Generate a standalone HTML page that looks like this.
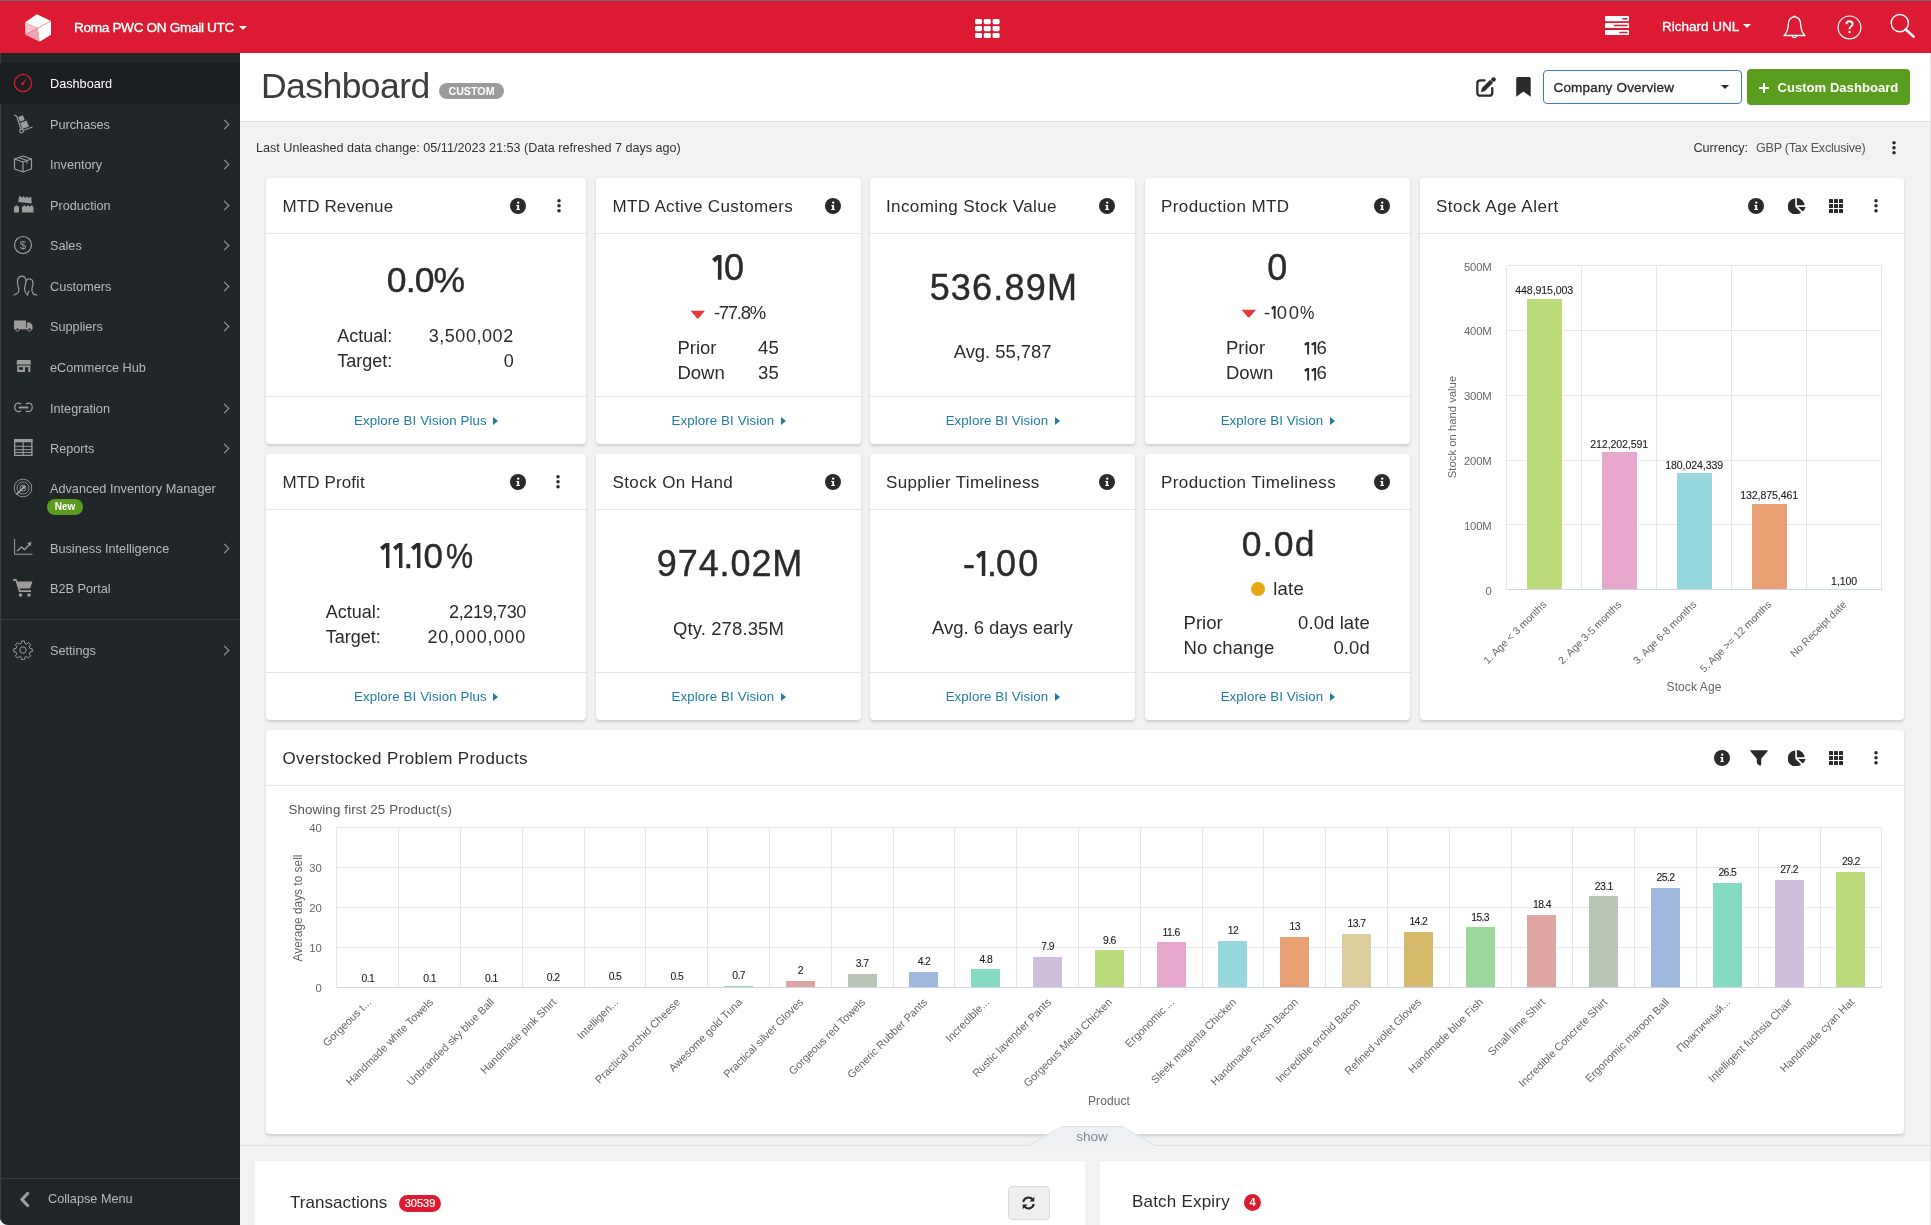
<!DOCTYPE html>
<html><head><meta charset="utf-8">
<style>
*{box-sizing:border-box;margin:0;padding:0}
html,body{width:1931px;height:1225px;overflow:hidden;background:#f2f2f2;font-family:"Liberation Sans",sans-serif;color:#333}
body{will-change:transform}
.abs{position:absolute}
#frameTop{position:absolute;left:0;top:0;width:1931px;height:1px;background:#6e6e6e;z-index:50}
#frameR{position:absolute;right:0;top:53px;width:1px;height:1172px;background:#e2e2e2;z-index:50}
#hdr{position:absolute;left:0;top:1px;width:1931px;height:52px;background:#dc1b32}
#side{position:absolute;left:0;top:53px;width:240px;height:1172px;background:#212729;border-bottom-left-radius:8px;overflow:hidden}
#side .edge{position:absolute;left:0;top:0;width:1px;height:100%;background:#3a4043}
.ni{position:absolute;left:0;width:240px;height:40px;color:#b9b9b9;font-size:12.7px}
.ni .t{position:absolute;left:50px;top:1px;line-height:40px;white-space:nowrap}
.ni svg.ic{position:absolute;left:14px;top:10px}
.ni .chev{position:absolute;left:221px;top:17px;width:7px;height:7px;border-right:1.3px solid #a0a0a0;border-top:1.3px solid #a0a0a0;transform:rotate(45deg)}
#main{position:absolute;left:240px;top:53px;width:1690px;height:1172px}
.card{position:absolute;background:#fff;border-radius:4px;box-shadow:0 2px 3px rgba(0,0,0,.15)}
.card .hd{position:absolute;left:0;top:0;width:100%;border-bottom:1px solid #e1e4ea}
.card .ttl{position:absolute;left:16px;font-size:17px;color:#333;white-space:nowrap}
.card .ft{position:absolute;left:0;width:100%;border-top:1px solid #e1e4ea}
.lnk{position:absolute;left:0;width:100%;text-align:center;color:#1b7ea9;font-size:13.5px;white-space:nowrap}
.lnk i{display:inline-block;width:0;height:0;border-left:4px solid #1b7ea9;border-top:4.5px solid transparent;border-bottom:4.5px solid transparent;margin-left:6px;vertical-align:0px}
.info{position:absolute;width:16px;height:16px;border-radius:50%;background:#262626;color:#fff;font:bold 11px "Liberation Mono",monospace;text-align:center;line-height:16px}
.kebab{position:absolute;width:4px;height:16px}
.kebab b{position:absolute;left:0;width:3.4px;height:3.4px;border-radius:50%;background:#2b2b2b}
.big{position:absolute;left:0;width:100%;text-align:center;color:#2b2b2b;white-space:nowrap}
</style></head>
<body>
<div id="frameTop"></div>
<div id="frameR"></div>
<div id="hdr">
  <!-- logo -->
  <svg class="abs" style="left:24px;top:12px" width="28" height="30" viewBox="0 0 28 30">
    <polygon points="12.8,1.2 1,9.6 13.8,15 27,8.1" fill="#fff"/>
    <polygon points="1,9.6 13.8,15 1.3,21.8" fill="#f5c3c9"/>
    <polygon points="1.3,21.8 13.8,15 15.7,28.7" fill="#efa6b0"/>
    <polygon points="13.8,15 27,8.1 27,21.8 15.7,28.7" fill="#fff"/>
    <line x1="1.3" y1="21.8" x2="27" y2="8.1" stroke="#e8808e" stroke-width="0.7"/>
  </svg>
  <div class="abs" style="left:74px;top:20.1px;line-height:13.6px;color:#fff;font-size:13.6px;letter-spacing:-0.33px;-webkit-text-stroke:0.35px #fff;white-space:nowrap">Roma PWC ON Gmail UTC</div>
  <div class="abs" style="left:239px;top:25.3px;border-top:4.5px solid #fff;border-left:4.1px solid transparent;border-right:4.1px solid transparent"></div>
  <!-- grid icon -->
  <svg class="abs" style="left:975.2px;top:17.8px" width="25" height="20" viewBox="0 0 25 20"><g fill="#fff"><rect x="0.0" y="0.00" width="7" height="5.2" rx="1.4"/><rect x="8.8" y="0.00" width="7" height="5.2" rx="1.4"/><rect x="17.6" y="0.00" width="7" height="5.2" rx="1.4"/><rect x="0.0" y="6.95" width="7" height="5.2" rx="1.4"/><rect x="8.8" y="6.95" width="7" height="5.2" rx="1.4"/><rect x="17.6" y="6.95" width="7" height="5.2" rx="1.4"/><rect x="0.0" y="13.90" width="7" height="5.2" rx="1.4"/><rect x="8.8" y="13.90" width="7" height="5.2" rx="1.4"/><rect x="17.6" y="13.90" width="7" height="5.2" rx="1.4"/></g></svg>

  <!-- server icon -->
  <svg class="abs" style="left:1605px;top:15px" width="24" height="20" viewBox="0 0 24 20">
    <rect x="0" y="0" width="24" height="5.2" rx="0.8" fill="#fff"/>
    <rect x="0" y="7.1" width="24" height="5" rx="0.8" fill="#fff"/>
    <rect x="0" y="14" width="24" height="5" rx="0.8" fill="#fff"/>
    <rect x="17.2" y="1.9" width="5.4" height="1.5" rx="0.7" fill="#dc1b32"/>
    <rect x="9" y="8.85" width="13.6" height="1.5" rx="0.7" fill="#dc1b32"/>
    <rect x="14.2" y="15.75" width="8.4" height="1.5" rx="0.7" fill="#dc1b32"/>
  </svg>
  <div class="abs" style="left:1662px;top:0;line-height:52px;color:#fff;font-size:13.5px;white-space:nowrap;-webkit-text-stroke:0.35px #fff">Richard UNL<span style="display:inline-block;margin-left:4px;border-top:4.5px solid #fff;border-left:4.2px solid transparent;border-right:4.2px solid transparent;vertical-align:3px;-webkit-text-stroke:0"></span></div>
  <!-- bell -->
  <svg class="abs" style="left:1782px;top:14px" width="25" height="26" viewBox="0 0 25 26">
    <path d="M12.5 1.5 C8 2.5 6.2 6 6.2 10 C6.2 14.5 5.5 17 2 20.5 H23 C19.5 17 18.8 14.5 18.8 10 C18.8 6 17 2.5 12.5 1.5 Z" fill="none" stroke="#fff" stroke-width="1.3" stroke-linejoin="round"/>
    <path d="M12.5 0.3 L13.5 1.8 H11.5 Z" fill="#fff"/>
    <path d="M10.3 21 A2.3 2.3 0 0 0 14.7 21" fill="none" stroke="#fff" stroke-width="1.1"/>
  </svg>
  <!-- help -->
  <svg class="abs" style="left:1836px;top:13px" width="27" height="27" viewBox="0 0 27 27">
    <circle cx="13.5" cy="13.4" r="11.4" fill="none" stroke="#fff" stroke-width="1.2"/>
    <path d="M10.3 10.3 C10.3 8.2 11.8 7.2 13.5 7.2 C15.3 7.2 16.6 8.3 16.6 10 C16.6 12 14 12.3 13.6 14.5 V15.2" fill="none" stroke="#fff" stroke-width="1.9"/>
    <circle cx="13.6" cy="18" r="1.2" fill="#fff"/>
  </svg>
  <!-- search -->
  <svg class="abs" style="left:1889px;top:12px" width="28" height="28" viewBox="0 0 28 28">
    <circle cx="10.8" cy="10.1" r="8.6" fill="none" stroke="#fff" stroke-width="1.4"/>
    <path d="M16.6 16.3 L24.6 23.6" stroke="#fff" stroke-width="2.6" stroke-linecap="round"/>
  </svg>
</div>

<div id="side">
  <div class="edge"></div>
<div class="abs" style="left:0;top:10px;width:240px;height:41px;background:#1b1f22"></div>
<div class="ni" style="top:10px"><svg class="ic" style="left:13px;top:10px" width="20" height="20" viewBox="0 0 20 20"><circle cx="10" cy="10" r="8.6" fill="none" stroke="#d81c32" stroke-width="1.3"/><path d="M14.2 5.4 L8.6 10.2 L10.2 11.6 Z" fill="#d81c32"/><circle cx="9.3" cy="10.9" r="1.3" fill="#d81c32"/></svg><div class="t" style="color:#fff;">Dashboard</div></div>
<div class="ni" style="top:51px"><svg class="ic" style="left:13px;top:10px" width="22" height="20" viewBox="0 0 22 20"><path d="M1 1.5 Q3 1 4 3 L8 15.5" fill="none" stroke="#9c9c9c" stroke-width="1.2"/><circle cx="8.5" cy="17" r="1.8" fill="none" stroke="#9c9c9c" stroke-width="1.2"/><path d="M10 16.5 L19.5 13" stroke="#9c9c9c" stroke-width="1.2"/><rect x="6" y="2" width="5" height="5" fill="#9c9c9c" transform="rotate(-20 8.5 4.5)"/><rect x="8" y="7.5" width="7" height="6.5" fill="#9c9c9c" transform="rotate(-20 11.5 10.7)"/></svg><div class="t" style="">Purchases</div><div class="chev"></div></div>
<div class="ni" style="top:91px"><svg class="ic" style="left:13px;top:10px" width="20" height="20" viewBox="0 0 20 20"><g fill="none" stroke="#9c9c9c" stroke-width="1.2" stroke-linejoin="round"><path d="M1.5 5 L10 2 L18.5 5 L18.5 15 L10 18 L1.5 15 Z"/><path d="M1.5 5 L10 8 L18.5 5"/><path d="M10 8 L10 18"/><path d="M5.5 3.5 L14 6.5 L14 9.5"/></g></svg><div class="t" style="">Inventory</div><div class="chev"></div></div>
<div class="ni" style="top:132px"><svg class="ic" style="left:14px;top:10px" width="24" height="20" viewBox="0 0 24 20"><g fill="#9c9c9c"><path d="M4.5 4.5 L5 1.5 h1.5 v1 h2 v-1 h1.5 v1 h2 v-1 h1.5 v1 h2 v-1 h1.5 L18 8 L4.5 7.5 Z" transform="rotate(4 11 5)"/><path d="M0 11.5 h1.5 v-1 h2 v1 h1.5 V17.5 H0 Z"/><path d="M8 11.5 h1.5 v-1 h2 v1 h1.5 v-1 h2 v1 h1.5 v-1 h2 v1 h1 V17.5 H8 Z"/></g></svg><div class="t" style="">Production</div><div class="chev"></div></div>
<div class="ni" style="top:172px"><svg class="ic" style="left:13px;top:10px" width="20" height="20" viewBox="0 0 20 20"><circle cx="10" cy="10" r="8.5" fill="none" stroke="#9c9c9c" stroke-width="1.2"/><text x="10" y="14.2" font-family="Liberation Sans" font-size="11.5" text-anchor="middle" fill="#9c9c9c">$</text></svg><div class="t" style="">Sales</div><div class="chev"></div></div>
<div class="ni" style="top:213px"><svg class="ic" style="left:13px;top:9px" width="26" height="22" viewBox="0 0 26 22"><g fill="none" stroke="#9c9c9c" stroke-width="1.2" stroke-linecap="round"><path d="M1 20 Q4 19 5.5 17 Q6.5 14 5 11 Q4 7 4.8 4 Q6.5 0.8 9.5 1.2 Q12.5 1.8 13 5 Q13 8 12 11 Q11 14 12 16 Q12.5 18.5 14.5 20"/><path d="M13.5 5.5 Q14.8 3.6 17.5 4 Q20 4.8 20 8 Q19.8 11 19 13 Q18.5 16 20 18.5 Q21.5 20 24 20"/><path d="M14.5 20 Q15 17 16 16"/></g></svg><div class="t" style="">Customers</div><div class="chev"></div></div>
<div class="ni" style="top:253px"><svg class="ic" style="left:14px;top:13.5px" width="20" height="12" viewBox="0 0 20 12"><g fill="#9c9c9c"><rect x="0" y="0.5" width="12" height="7.5"/><path d="M12.8 2.5 h3.5 L18.5 5.5 V8.5 H12.8 Z"/><rect x="0" y="8" width="18.5" height="1.3"/></g><circle cx="3.5" cy="9.5" r="1.7" fill="#212729" stroke="#9c9c9c" stroke-width="1"/><circle cx="15.5" cy="9.5" r="1.7" fill="#212729" stroke="#9c9c9c" stroke-width="1"/></svg><div class="t" style="">Suppliers</div><div class="chev"></div></div>
<div class="ni" style="top:294px"><svg class="ic" style="left:16px;top:13px" width="16" height="14" viewBox="0 0 16 14"><g fill="#9c9c9c"><path d="M1 0 H14.5 L15 4.5 H0.5 Z"/><path d="M1.2 5.5 H14.3 V12 H1.2 Z"/></g><rect x="3" y="7.2" width="4" height="2.6" fill="#212729"/><rect x="9" y="7.2" width="3.3" height="4.8" fill="#212729"/></svg><div class="t" style="">eCommerce Hub</div></div>
<div class="ni" style="top:335px"><svg class="ic" style="left:14px;top:14px" width="19" height="11" viewBox="0 0 20 11"><g fill="none" stroke="#9c9c9c" stroke-width="1.3"><path d="M7.5 2 Q5.5 0.6 4.3 0.9 Q0.7 1.3 0.8 5.5 Q1 9.5 4.5 9.8 Q6.5 9.8 7.5 9"/><path d="M12.5 2 Q14.5 0.6 15.7 0.9 Q19.3 1.3 19.2 5.5 Q19 9.5 15.5 9.8 Q13.5 9.8 12.5 9"/></g><rect x="5" y="4.5" width="10" height="2" fill="#9c9c9c"/></svg><div class="t" style="">Integration</div><div class="chev"></div></div>
<div class="ni" style="top:375px"><svg class="ic" style="left:14px;top:11px" width="19" height="18" viewBox="0 0 19 18"><g fill="#9c9c9c"><rect x="0" y="0" width="18.5" height="3.3"/><rect x="0" y="0" width="1.3" height="17"/><rect x="17.2" y="0" width="1.3" height="17"/><rect x="0" y="15.7" width="18.5" height="1.3"/><rect x="0" y="6.8" width="18.5" height="1"/><rect x="0" y="10.2" width="18.5" height="1"/><rect x="0" y="13" width="18.5" height="1"/><rect x="8.6" y="3" width="1.1" height="13"/></g></svg><div class="t" style="">Reports</div><div class="chev"></div></div>
<div class="ni" style="top:416px"><svg class="ic" style="left:13px;top:8.5px" width="20" height="20" viewBox="0 0 20 20"><g fill="none" stroke="#9c9c9c" stroke-width="0.9"><circle cx="10" cy="10" r="8.8"/><circle cx="10" cy="10" r="6"/><circle cx="10" cy="10" r="3"/></g><path d="M3.5 16.5 L11 9" stroke="#ababab" stroke-width="1.6"/><path d="M12 8 L8.5 8.5 L11.5 11.5 Z" fill="#ababab"/></svg><div class="t" style="line-height:16px;top:12px">Advanced Inventory Manager</div><div class="abs" style="left:47px;top:30px;width:36px;height:16px;border-radius:8px;background:#5a9d1e;color:#fff;font-size:10px;font-weight:bold;text-align:center;line-height:16px">New</div></div>
<div class="ni" style="top:475px"><svg class="ic" style="left:14px;top:11px" width="19" height="16" viewBox="0 0 19 16"><path d="M0.6 0 V15.2 H18.5" fill="none" stroke="#9c9c9c" stroke-width="1"/><path d="M3 12 L7.5 8 L10.5 10.5 L16 5" fill="none" stroke="#9c9c9c" stroke-width="1.3"/><path d="M17.5 3 L13.2 4 L16.5 7.3 Z" fill="#9c9c9c"/></svg><div class="t" style="">Business Intelligence</div><div class="chev"></div></div>
<div class="ni" style="top:515px"><svg class="ic" style="left:13px;top:10px" width="21" height="20" viewBox="0 0 21 20"><g fill="#9c9c9c"><path d="M0 1 H3.5 L4.5 3.5 H19.5 L17 10.5 H6.5 L7.2 12.3 H18 V14 H6 L2.5 2.7 H0 Z"/><circle cx="7.5" cy="17" r="1.8"/><circle cx="16" cy="17" r="1.8"/></g></svg><div class="t" style="">B2B Portal</div></div>
<div class="ni" style="top:577px"><svg class="ic" style="left:13px;top:10px" width="20" height="20" viewBox="0 0 20 20"><g fill="none" stroke="#9c9c9c" stroke-width="1"><path d="M8.6 1 h2.8 l0.5 2.4 l1.6 0.7 l2.1-1.4 l2 2 l-1.4 2.1 l0.7 1.6 l2.4 0.5 v2.8 l-2.4 0.5 l-0.7 1.6 l1.4 2.1 l-2 2 l-2.1-1.4 l-1.6 0.7 l-0.5 2.4 h-2.8 l-0.5-2.4 l-1.6-0.7 l-2.1 1.4 l-2-2 l1.4-2.1 l-0.7-1.6 l-2.4-0.5 v-2.8 l2.4-0.5 l0.7-1.6 l-1.4-2.1 l2-2 l2.1 1.4 l1.6-0.7 Z"/><circle cx="10" cy="10" r="3.2"/></g></svg><div class="t" style="">Settings</div><div class="chev"></div></div>
<div class="abs" style="left:0;top:566px;width:240px;height:1px;background:#373d40"></div>
<div class="abs" style="left:0;top:1125px;width:240px;height:1px;background:#373d40"></div>
<div class="ni" style="top:1125px;height:40px"><svg class="abs" style="left:19px;top:13px" width="12" height="17" viewBox="0 0 12 17"><path d="M9.5 1.5 L3 8.5 L9.5 15.5" fill="none" stroke="#9d9d9d" stroke-width="3.2" stroke-linejoin="miter"/></svg><div class="t" style="left:48px;line-height:40px">Collapse Menu</div></div>
</div>

<div id="main"></div>
<div style="position:absolute;left:240.00px;top:53.00px;width:1690.00px;height:69.00px;background:#fff;border-bottom:1px solid #dde1e7;box-sizing:border-box"></div>
<div style="position:absolute;top:68.83px;font-size:35.5px;line-height:35.5px;color:#3c3c3c;white-space:nowrap;letter-spacing:-0.55px;left:261.00px;">Dashboard</div>
<div style="position:absolute;left:439px;top:83px;width:65px;height:16px;border-radius:8px;background:#9b9b9b;color:#fff;font-size:10.7px;font-weight:bold;text-align:center;line-height:16px">CUSTOM</div>
<svg style="position:absolute;left:1475px;top:76px" width="23" height="23" viewBox="0 0 23 23">
    <path d="M9.6 4.35 H5.35 Q2.35 4.35 2.35 7.35 V16.65 Q2.35 19.65 5.35 19.65 H14.25 Q17.25 19.65 17.25 16.65 V12.1" fill="none" stroke="#2b2b2b" stroke-width="2.3" stroke-linecap="round"/>
    <path d="M6.0 16.0 L7.2 11.9 L15.1 4.0 L17.9 6.8 L10.0 14.7 Z" fill="#2b2b2b" stroke="#2b2b2b" stroke-width="0.4" stroke-linejoin="round"/>
    <circle cx="18.5" cy="3.5" r="2.3" fill="#2b2b2b"/>
  </svg>
<svg style="position:absolute;left:1516px;top:77px" width="15" height="20" viewBox="0 0 15 20">
    <path d="M0.2 1.6 Q0.2 0.1 1.7 0.1 H13.2 Q14.7 0.1 14.7 1.6 V19.7 L7.45 14.6 L0.2 19.7 Z" fill="#2b2b2b"/>
  </svg>
<div style="position:absolute;left:1543px;top:70px;width:199px;height:34px;border:1.5px solid #3b7bbf;border-radius:4px;background:#fff"></div>
<div style="position:absolute;top:80.73px;font-size:13.5px;line-height:13.5px;color:#2b2b2b;white-space:nowrap;letter-spacing:0.18px;-webkit-text-stroke:0.35px #2b2b2b;left:1553.50px;">Company Overview</div>
<div style="position:absolute;left:1720.5px;top:84.6px;border-top:4.7px solid #2b2b2b;border-left:4.2px solid transparent;border-right:4.2px solid transparent"></div>
<div style="position:absolute;left:1747px;top:69px;width:163px;height:36px;border-radius:4px;background:#5a9e1f"></div>
<div style="position:absolute;left:1763.30px;top:82.80px;width:1.50px;height:10.00px;background:#fff;"></div>
<div style="position:absolute;left:1759.00px;top:87.05px;width:10.00px;height:1.50px;background:#fff;"></div>
<div style="position:absolute;top:81.16px;font-size:13.1px;line-height:13.1px;color:#fff;white-space:nowrap;font-weight:700;left:1777.50px;">Custom Dashboard</div>
<div style="position:absolute;top:142.29px;font-size:12.6px;line-height:12.6px;color:#333;white-space:nowrap;left:256.00px;">Last Unleashed data change: 05/11/2023 21:53 (Data refreshed 7 days ago)</div>
<div style="position:absolute;top:142.29px;font-size:12.6px;line-height:12.6px;color:#333;white-space:nowrap;left:1693.50px;">Currency:</div>
<div style="position:absolute;top:142.29px;font-size:12.6px;line-height:12.6px;color:#555;white-space:nowrap;letter-spacing:-0.27px;left:1756.00px;">GBP (Tax Exclusive)</div>
<svg style="position:absolute;left:1891.0px;top:140.0px" width="6" height="16" viewBox="0 0 6 16"><circle cx="3" cy="2.8" r="1.75" fill="#2a2a2a"/><circle cx="3" cy="7.8" r="1.75" fill="#2a2a2a"/><circle cx="3" cy="12.8" r="1.75" fill="#2a2a2a"/></svg>
<div class="card" style="left:266px;top:178px;width:320px;height:266px"></div>
<div style="position:absolute;left:266.00px;top:233.00px;width:320.00px;height:1.00px;background:#e2e5eb;"></div>
<div style="position:absolute;left:266.00px;top:396.00px;width:320.00px;height:1.00px;background:#e2e5eb;"></div>
<div style="position:absolute;top:197.75px;font-size:17px;line-height:17px;color:#2b2b2b;white-space:nowrap;letter-spacing:0.1px;left:282.50px;">MTD Revenue</div>
<svg style="position:absolute;left:510.0px;top:198.0px" width="16" height="16" viewBox="0 0 16 16"><circle cx="8" cy="8" r="8" fill="#2a2a2a"/><circle cx="8.2" cy="4.6" r="1.2" fill="#fff"/><path d="M6.2 6.9 H9.1 V10.9 H10 V12.1 H6.2 V10.9 H7.2 V8.1 H6.2 Z" fill="#fff"/></svg>
<svg style="position:absolute;left:555.5px;top:198.0px" width="6" height="16" viewBox="0 0 6 16"><circle cx="3" cy="2.8" r="1.75" fill="#2a2a2a"/><circle cx="3" cy="7.8" r="1.75" fill="#2a2a2a"/><circle cx="3" cy="12.8" r="1.75" fill="#2a2a2a"/></svg>
<div style="position:absolute;top:262.62px;font-size:35.5px;line-height:35.5px;color:#2b2b2b;white-space:nowrap;letter-spacing:-0.87px;-webkit-text-stroke:0.4px #2b2b2b;left:25.50px;width:800px;text-align:center;">0.0%</div>
<div style="position:absolute;top:326.80px;font-size:18px;line-height:18px;color:#2b2b2b;white-space:nowrap;left:337.30px;">Actual:</div>
<div style="position:absolute;top:326.80px;font-size:18px;line-height:18px;color:#2b2b2b;white-space:nowrap;letter-spacing:0.55px;left:-286.30px;width:800px;text-align:right;">3,500,002</div>
<div style="position:absolute;top:351.50px;font-size:18px;line-height:18px;color:#2b2b2b;white-space:nowrap;left:337.30px;">Target:</div>
<div style="position:absolute;top:351.50px;font-size:18px;line-height:18px;color:#2b2b2b;white-space:nowrap;left:-286.30px;width:800px;text-align:right;">0</div>
<div style="position:absolute;top:413.69px;font-size:13.3px;line-height:13.3px;color:#1f7ba6;white-space:nowrap;letter-spacing:0.1px;left:20.40px;width:800px;text-align:center;">Explore BI Vision Plus</div>
<div style="position:absolute;left:493px;top:417px;width:0;height:0;border-left:5px solid #1f7ba6;border-top:4px solid transparent;border-bottom:4px solid transparent"></div>
<div class="card" style="left:596px;top:178px;width:265px;height:266px"></div>
<div style="position:absolute;left:596.00px;top:233.00px;width:265.00px;height:1.00px;background:#e2e5eb;"></div>
<div style="position:absolute;left:596.00px;top:396.00px;width:265.00px;height:1.00px;background:#e2e5eb;"></div>
<div style="position:absolute;top:197.75px;font-size:17px;line-height:17px;color:#2b2b2b;white-space:nowrap;letter-spacing:0.35px;left:612.40px;">MTD Active Customers</div>
<svg style="position:absolute;left:825.0px;top:198.0px" width="16" height="16" viewBox="0 0 16 16"><circle cx="8" cy="8" r="8" fill="#2a2a2a"/><circle cx="8.2" cy="4.6" r="1.2" fill="#fff"/><path d="M6.2 6.9 H9.1 V10.9 H10 V12.1 H6.2 V10.9 H7.2 V8.1 H6.2 Z" fill="#fff"/></svg>
<svg style="position:absolute;left:711.50px;top:255.00px;overflow:visible" width="9.50" height="24.70" viewBox="0 0 9.500 24.700"><path d="M5.900 0 H9.500 V24.700 H5.900 V4.500 L3.060 7.410 L0 3.990 L5.360 0 Z" fill="#2b2b2b"/></svg>
<div style="position:absolute;top:249.90px;font-size:36px;line-height:36px;color:#2b2b2b;white-space:nowrap;-webkit-text-stroke:0.4px #2b2b2b;left:723.97px;">0</div>
<svg style="position:absolute;left:690px;top:309.5px" width="15.5" height="9" viewBox="0 0 16 9"><path d="M0.5 0.5 H15.5 L8.8 8.3 Q8 9 7.2 8.3 Z" fill="#e5393b"/></svg>
<div style="position:absolute;top:303.88px;font-size:18.5px;line-height:18.5px;color:#2b2b2b;white-space:nowrap;letter-spacing:-1.3px;left:714.00px;">-77.8%</div>
<div style="position:absolute;top:339.38px;font-size:18.5px;line-height:18.5px;color:#2b2b2b;white-space:nowrap;left:677.40px;">Prior</div>
<div style="position:absolute;top:339.38px;font-size:18.5px;line-height:18.5px;color:#2b2b2b;white-space:nowrap;letter-spacing:0.3px;left:758.00px;">45</div>
<div style="position:absolute;top:364.27px;font-size:18.5px;line-height:18.5px;color:#2b2b2b;white-space:nowrap;left:677.40px;">Down</div>
<div style="position:absolute;top:364.27px;font-size:18.5px;line-height:18.5px;color:#2b2b2b;white-space:nowrap;letter-spacing:0.3px;left:758.00px;">35</div>
<div style="position:absolute;top:413.69px;font-size:13.3px;line-height:13.3px;color:#1f7ba6;white-space:nowrap;letter-spacing:0.1px;left:322.90px;width:800px;text-align:center;">Explore BI Vision</div>
<div style="position:absolute;left:781px;top:417px;width:0;height:0;border-left:5px solid #1f7ba6;border-top:4px solid transparent;border-bottom:4px solid transparent"></div>
<div class="card" style="left:870px;top:178px;width:265px;height:266px"></div>
<div style="position:absolute;left:870.00px;top:233.00px;width:265.00px;height:1.00px;background:#e2e5eb;"></div>
<div style="position:absolute;left:870.00px;top:396.00px;width:265.00px;height:1.00px;background:#e2e5eb;"></div>
<div style="position:absolute;top:197.75px;font-size:17px;line-height:17px;color:#2b2b2b;white-space:nowrap;letter-spacing:0.39px;left:886.00px;">Incoming Stock Value</div>
<svg style="position:absolute;left:1099.0px;top:198.0px" width="16" height="16" viewBox="0 0 16 16"><circle cx="8" cy="8" r="8" fill="#2a2a2a"/><circle cx="8.2" cy="4.6" r="1.2" fill="#fff"/><path d="M6.2 6.9 H9.1 V10.9 H10 V12.1 H6.2 V10.9 H7.2 V8.1 H6.2 Z" fill="#fff"/></svg>
<div style="position:absolute;top:270.10px;font-size:36px;line-height:36px;color:#2b2b2b;white-space:nowrap;letter-spacing:1.2px;-webkit-text-stroke:0.4px #2b2b2b;left:603.90px;width:800px;text-align:center;">536.89M</div>
<div style="position:absolute;top:343.17px;font-size:18.5px;line-height:18.5px;color:#2b2b2b;white-space:nowrap;letter-spacing:-0.06px;left:602.60px;width:800px;text-align:center;">Avg. 55,787</div>
<div style="position:absolute;top:413.69px;font-size:13.3px;line-height:13.3px;color:#1f7ba6;white-space:nowrap;letter-spacing:0.1px;left:597.00px;width:800px;text-align:center;">Explore BI Vision</div>
<div style="position:absolute;left:1055px;top:417px;width:0;height:0;border-left:5px solid #1f7ba6;border-top:4px solid transparent;border-bottom:4px solid transparent"></div>
<div class="card" style="left:1145px;top:178px;width:265px;height:266px"></div>
<div style="position:absolute;left:1145.00px;top:233.00px;width:265.00px;height:1.00px;background:#e2e5eb;"></div>
<div style="position:absolute;left:1145.00px;top:396.00px;width:265.00px;height:1.00px;background:#e2e5eb;"></div>
<div style="position:absolute;top:197.75px;font-size:17px;line-height:17px;color:#2b2b2b;white-space:nowrap;letter-spacing:0.4px;left:1161.00px;">Production MTD</div>
<svg style="position:absolute;left:1374.0px;top:198.0px" width="16" height="16" viewBox="0 0 16 16"><circle cx="8" cy="8" r="8" fill="#2a2a2a"/><circle cx="8.2" cy="4.6" r="1.2" fill="#fff"/><path d="M6.2 6.9 H9.1 V10.9 H10 V12.1 H6.2 V10.9 H7.2 V8.1 H6.2 Z" fill="#fff"/></svg>
<div style="position:absolute;top:250.00px;font-size:36px;line-height:36px;color:#2b2b2b;white-space:nowrap;-webkit-text-stroke:0.4px #2b2b2b;left:877.30px;width:800px;text-align:center;">0</div>
<svg style="position:absolute;left:1241px;top:309.3px" width="15.5" height="9" viewBox="0 0 16 9"><path d="M0.5 0.5 H15.5 L8.8 8.3 Q8 9 7.2 8.3 Z" fill="#e5393b"/></svg>
<div style="position:absolute;top:303.57px;font-size:18.5px;line-height:18.5px;color:#2b2b2b;white-space:nowrap;left:1263.94px;">-</div>
<svg style="position:absolute;left:1270.60px;top:306.10px;overflow:visible" width="4.60" height="12.70" viewBox="0 0 4.600 12.700"><path d="M2.700 0 H4.600 V12.700 H2.700 V2.375 L1.615 3.810 L0 2.005 L2.415 0 Z" fill="#2b2b2b"/></svg>
<div style="position:absolute;top:303.57px;font-size:18.5px;line-height:18.5px;color:#2b2b2b;white-space:nowrap;left:1276.77px;">0</div>
<div style="position:absolute;top:303.57px;font-size:18.5px;line-height:18.5px;color:#2b2b2b;white-space:nowrap;left:1288.77px;">0</div>
<div style="position:absolute;top:303.57px;font-size:18.5px;line-height:18.5px;color:#2b2b2b;white-space:nowrap;left:1299.94px;transform:scaleX(0.87);transform-origin:0 0;">%</div>
<div style="position:absolute;top:338.77px;font-size:18.5px;line-height:18.5px;color:#2b2b2b;white-space:nowrap;left:1226.00px;">Prior</div>
<svg style="position:absolute;left:1304.00px;top:342.00px;overflow:visible" width="5.10" height="12.50" viewBox="0 0 5.100 12.500"><path d="M3.200 0 H5.100 V12.500 H3.200 V2.375 L1.615 3.750 L0 1.945 L2.915 0 Z" fill="#2b2b2b"/></svg>
<svg style="position:absolute;left:1310.90px;top:342.00px;overflow:visible" width="5.10" height="12.50" viewBox="0 0 5.100 12.500"><path d="M3.200 0 H5.100 V12.500 H3.200 V2.375 L1.615 3.750 L0 1.945 L2.915 0 Z" fill="#2b2b2b"/></svg>
<div style="position:absolute;top:338.77px;font-size:18.5px;line-height:18.5px;color:#2b2b2b;white-space:nowrap;left:1316.45px;">6</div>
<div style="position:absolute;top:364.27px;font-size:18.5px;line-height:18.5px;color:#2b2b2b;white-space:nowrap;left:1226.00px;">Down</div>
<svg style="position:absolute;left:1304.00px;top:367.50px;overflow:visible" width="5.10" height="12.50" viewBox="0 0 5.100 12.500"><path d="M3.200 0 H5.100 V12.500 H3.200 V2.375 L1.615 3.750 L0 1.945 L2.915 0 Z" fill="#2b2b2b"/></svg>
<svg style="position:absolute;left:1310.90px;top:367.50px;overflow:visible" width="5.10" height="12.50" viewBox="0 0 5.100 12.500"><path d="M3.200 0 H5.100 V12.500 H3.200 V2.375 L1.615 3.750 L0 1.945 L2.915 0 Z" fill="#2b2b2b"/></svg>
<div style="position:absolute;top:364.27px;font-size:18.5px;line-height:18.5px;color:#2b2b2b;white-space:nowrap;left:1316.45px;">6</div>
<div style="position:absolute;top:413.69px;font-size:13.3px;line-height:13.3px;color:#1f7ba6;white-space:nowrap;letter-spacing:0.1px;left:872.00px;width:800px;text-align:center;">Explore BI Vision</div>
<div style="position:absolute;left:1330px;top:417px;width:0;height:0;border-left:5px solid #1f7ba6;border-top:4px solid transparent;border-bottom:4px solid transparent"></div>
<div class="card" style="left:266px;top:454px;width:320px;height:266px"></div>
<div style="position:absolute;left:266.00px;top:509.00px;width:320.00px;height:1.00px;background:#e2e5eb;"></div>
<div style="position:absolute;left:266.00px;top:672.00px;width:320.00px;height:1.00px;background:#e2e5eb;"></div>
<div style="position:absolute;top:474.15px;font-size:17px;line-height:17px;color:#2b2b2b;white-space:nowrap;letter-spacing:0.1px;left:282.50px;">MTD Profit</div>
<svg style="position:absolute;left:510.0px;top:474.0px" width="16" height="16" viewBox="0 0 16 16"><circle cx="8" cy="8" r="8" fill="#2a2a2a"/><circle cx="8.2" cy="4.6" r="1.2" fill="#fff"/><path d="M6.2 6.9 H9.1 V10.9 H10 V12.1 H6.2 V10.9 H7.2 V8.1 H6.2 Z" fill="#fff"/></svg>
<svg style="position:absolute;left:555.0px;top:474.0px" width="6" height="16" viewBox="0 0 6 16"><circle cx="3" cy="2.8" r="1.75" fill="#2a2a2a"/><circle cx="3" cy="7.8" r="1.75" fill="#2a2a2a"/><circle cx="3" cy="12.8" r="1.75" fill="#2a2a2a"/></svg>
<svg style="position:absolute;left:380.00px;top:543.00px;overflow:visible" width="9.40" height="24.90" viewBox="0 0 9.400 24.900"><path d="M6.000 0 H9.400 V24.900 H6.000 V4.250 L2.890 7.470 L0 4.240 L5.490 0 Z" fill="#2b2b2b"/></svg>
<svg style="position:absolute;left:392.50px;top:543.00px;overflow:visible" width="9.40" height="24.90" viewBox="0 0 9.400 24.900"><path d="M6.000 0 H9.400 V24.900 H6.000 V4.250 L2.890 7.470 L0 4.240 L5.490 0 Z" fill="#2b2b2b"/></svg>
<div style="position:absolute;top:538.15px;font-size:35px;line-height:35px;color:#2b2b2b;white-space:nowrap;-webkit-text-stroke:0.4px #2b2b2b;left:403.50px;">.</div>
<svg style="position:absolute;left:410.90px;top:543.00px;overflow:visible" width="9.40" height="24.90" viewBox="0 0 9.400 24.900"><path d="M6.000 0 H9.400 V24.900 H6.000 V4.250 L2.890 7.470 L0 4.240 L5.490 0 Z" fill="#2b2b2b"/></svg>
<div style="position:absolute;top:538.15px;font-size:35px;line-height:35px;color:#2b2b2b;white-space:nowrap;-webkit-text-stroke:0.4px #2b2b2b;left:423.50px;">0</div>
<div style="position:absolute;top:538.15px;font-size:35px;line-height:35px;color:#2b2b2b;white-space:nowrap;-webkit-text-stroke:0.4px #2b2b2b;left:445.53px;transform:scaleX(0.87);transform-origin:0 0;">%</div>
<div style="position:absolute;top:603.30px;font-size:18px;line-height:18px;color:#2b2b2b;white-space:nowrap;left:325.70px;">Actual:</div>
<div style="position:absolute;top:603.30px;font-size:18px;line-height:18px;color:#2b2b2b;white-space:nowrap;letter-spacing:-0.34px;left:-274.00px;width:800px;text-align:right;">2,219,730</div>
<div style="position:absolute;top:628.10px;font-size:18px;line-height:18px;color:#2b2b2b;white-space:nowrap;left:325.70px;">Target:</div>
<div style="position:absolute;top:628.10px;font-size:18px;line-height:18px;color:#2b2b2b;white-space:nowrap;letter-spacing:0.84px;left:-274.00px;width:800px;text-align:right;">20,000,000</div>
<div style="position:absolute;top:690.20px;font-size:13.3px;line-height:13.3px;color:#1f7ba6;white-space:nowrap;letter-spacing:0.1px;left:20.40px;width:800px;text-align:center;">Explore BI Vision Plus</div>
<div style="position:absolute;left:493px;top:693px;width:0;height:0;border-left:5px solid #1f7ba6;border-top:4px solid transparent;border-bottom:4px solid transparent"></div>
<div class="card" style="left:596px;top:454px;width:265px;height:266px"></div>
<div style="position:absolute;left:596.00px;top:509.00px;width:265.00px;height:1.00px;background:#e2e5eb;"></div>
<div style="position:absolute;left:596.00px;top:672.00px;width:265.00px;height:1.00px;background:#e2e5eb;"></div>
<div style="position:absolute;top:474.15px;font-size:17px;line-height:17px;color:#2b2b2b;white-space:nowrap;letter-spacing:0.42px;left:612.40px;">Stock On Hand</div>
<svg style="position:absolute;left:825.0px;top:474.0px" width="16" height="16" viewBox="0 0 16 16"><circle cx="8" cy="8" r="8" fill="#2a2a2a"/><circle cx="8.2" cy="4.6" r="1.2" fill="#fff"/><path d="M6.2 6.9 H9.1 V10.9 H10 V12.1 H6.2 V10.9 H7.2 V8.1 H6.2 Z" fill="#fff"/></svg>
<div style="position:absolute;top:546.40px;font-size:36px;line-height:36px;color:#2b2b2b;white-space:nowrap;letter-spacing:0.9px;-webkit-text-stroke:0.4px #2b2b2b;left:330.00px;width:800px;text-align:center;">974.02M</div>
<div style="position:absolute;top:619.67px;font-size:18.5px;line-height:18.5px;color:#2b2b2b;white-space:nowrap;letter-spacing:0.1px;left:328.50px;width:800px;text-align:center;">Qty. 278.35M</div>
<div style="position:absolute;top:690.20px;font-size:13.3px;line-height:13.3px;color:#1f7ba6;white-space:nowrap;letter-spacing:0.1px;left:322.90px;width:800px;text-align:center;">Explore BI Vision</div>
<div style="position:absolute;left:781px;top:693px;width:0;height:0;border-left:5px solid #1f7ba6;border-top:4px solid transparent;border-bottom:4px solid transparent"></div>
<div class="card" style="left:870px;top:454px;width:265px;height:266px"></div>
<div style="position:absolute;left:870.00px;top:509.00px;width:265.00px;height:1.00px;background:#e2e5eb;"></div>
<div style="position:absolute;left:870.00px;top:672.00px;width:265.00px;height:1.00px;background:#e2e5eb;"></div>
<div style="position:absolute;top:474.15px;font-size:17px;line-height:17px;color:#2b2b2b;white-space:nowrap;letter-spacing:0.33px;left:886.00px;">Supplier Timeliness</div>
<svg style="position:absolute;left:1099.0px;top:474.0px" width="16" height="16" viewBox="0 0 16 16"><circle cx="8" cy="8" r="8" fill="#2a2a2a"/><circle cx="8.2" cy="4.6" r="1.2" fill="#fff"/><path d="M6.2 6.9 H9.1 V10.9 H10 V12.1 H6.2 V10.9 H7.2 V8.1 H6.2 Z" fill="#fff"/></svg>
<div style="position:absolute;top:546.00px;font-size:36px;line-height:36px;color:#2b2b2b;white-space:nowrap;-webkit-text-stroke:0.4px #2b2b2b;left:962.94px;">-</div>
<svg style="position:absolute;left:976.00px;top:550.80px;overflow:visible" width="9.30" height="25.00" viewBox="0 0 9.300 25.000"><path d="M5.800 0 H9.300 V25.000 H5.800 V4.375 L2.975 7.500 L0 4.175 L5.275 0 Z" fill="#2b2b2b"/></svg>
<div style="position:absolute;top:546.00px;font-size:36px;line-height:36px;color:#2b2b2b;white-space:nowrap;-webkit-text-stroke:0.4px #2b2b2b;left:987.11px;">.</div>
<div style="position:absolute;top:546.00px;font-size:36px;line-height:36px;color:#2b2b2b;white-space:nowrap;-webkit-text-stroke:0.4px #2b2b2b;left:995.97px;">0</div>
<div style="position:absolute;top:546.00px;font-size:36px;line-height:36px;color:#2b2b2b;white-space:nowrap;-webkit-text-stroke:0.4px #2b2b2b;left:1018.27px;">0</div>
<div style="position:absolute;top:619.27px;font-size:18.5px;line-height:18.5px;color:#2b2b2b;white-space:nowrap;letter-spacing:-0.06px;left:602.40px;width:800px;text-align:center;">Avg. 6 days early</div>
<div style="position:absolute;top:690.20px;font-size:13.3px;line-height:13.3px;color:#1f7ba6;white-space:nowrap;letter-spacing:0.1px;left:597.00px;width:800px;text-align:center;">Explore BI Vision</div>
<div style="position:absolute;left:1055px;top:693px;width:0;height:0;border-left:5px solid #1f7ba6;border-top:4px solid transparent;border-bottom:4px solid transparent"></div>
<div class="card" style="left:1145px;top:454px;width:265px;height:266px"></div>
<div style="position:absolute;left:1145.00px;top:509.00px;width:265.00px;height:1.00px;background:#e2e5eb;"></div>
<div style="position:absolute;left:1145.00px;top:672.00px;width:265.00px;height:1.00px;background:#e2e5eb;"></div>
<div style="position:absolute;top:474.15px;font-size:17px;line-height:17px;color:#2b2b2b;white-space:nowrap;letter-spacing:0.42px;left:1161.00px;">Production Timeliness</div>
<svg style="position:absolute;left:1374.0px;top:474.0px" width="16" height="16" viewBox="0 0 16 16"><circle cx="8" cy="8" r="8" fill="#2a2a2a"/><circle cx="8.2" cy="4.6" r="1.2" fill="#fff"/><path d="M6.2 6.9 H9.1 V10.9 H10 V12.1 H6.2 V10.9 H7.2 V8.1 H6.2 Z" fill="#fff"/></svg>
<div style="position:absolute;top:527.33px;font-size:35.5px;line-height:35.5px;color:#2b2b2b;white-space:nowrap;letter-spacing:1.2px;-webkit-text-stroke:0.4px #2b2b2b;left:878.80px;width:800px;text-align:center;">0.0d</div>
<div style="position:absolute;left:1251px;top:582px;width:14px;height:14px;border-radius:50%;background:#e5a813"></div>
<div style="position:absolute;top:580.07px;font-size:18.5px;line-height:18.5px;color:#2b2b2b;white-space:nowrap;letter-spacing:0.2px;left:1273.30px;">late</div>
<div style="position:absolute;top:613.98px;font-size:18.5px;line-height:18.5px;color:#2b2b2b;white-space:nowrap;left:1183.60px;">Prior</div>
<div style="position:absolute;top:613.98px;font-size:18.5px;line-height:18.5px;color:#2b2b2b;white-space:nowrap;letter-spacing:0.1px;left:569.90px;width:800px;text-align:right;">0.0d late</div>
<div style="position:absolute;top:638.67px;font-size:18.5px;line-height:18.5px;color:#2b2b2b;white-space:nowrap;letter-spacing:0.15px;left:1183.60px;">No change</div>
<div style="position:absolute;top:638.67px;font-size:18.5px;line-height:18.5px;color:#2b2b2b;white-space:nowrap;letter-spacing:0.1px;left:569.90px;width:800px;text-align:right;">0.0d</div>
<div style="position:absolute;top:690.20px;font-size:13.3px;line-height:13.3px;color:#1f7ba6;white-space:nowrap;letter-spacing:0.1px;left:872.00px;width:800px;text-align:center;">Explore BI Vision</div>
<div style="position:absolute;left:1330px;top:693px;width:0;height:0;border-left:5px solid #1f7ba6;border-top:4px solid transparent;border-bottom:4px solid transparent"></div>
<div class="card" style="left:1420px;top:178px;width:484px;height:542px"></div>
<div style="position:absolute;left:1420.00px;top:233.00px;width:484.00px;height:1.00px;background:#e2e5eb;"></div>
<div style="position:absolute;top:197.75px;font-size:17px;line-height:17px;color:#2b2b2b;white-space:nowrap;letter-spacing:0.5px;left:1436.00px;">Stock Age Alert</div>
<svg style="position:absolute;left:1748.0px;top:198.0px" width="16" height="16" viewBox="0 0 16 16"><circle cx="8" cy="8" r="8" fill="#2a2a2a"/><circle cx="8.2" cy="4.6" r="1.2" fill="#fff"/><path d="M6.2 6.9 H9.1 V10.9 H10 V12.1 H6.2 V10.9 H7.2 V8.1 H6.2 Z" fill="#fff"/></svg>
<svg style="position:absolute;left:1787.5px;top:198.0px" width="18" height="16" viewBox="0 0 18 16"><path d="M7.3 0.5 V8.7 L13.0 14.4 A8 8 0 1 1 7.3 0.5 Z" fill="#2a2a2a"/><path d="M8.9 0 A7.8 7.8 0 0 1 16.5 7.3 H8.9 Z" fill="#2a2a2a"/><path d="M10.2 8.9 H17.6 A7.8 7.8 0 0 1 14.6 13.4 Z" fill="#2a2a2a"/></svg>
<svg style="position:absolute;left:1829.0px;top:199.0px" width="14" height="14" viewBox="0 0 14 14"><rect x="0" y="0" width="4" height="4" rx="0.6" fill="#2a2a2a"/><rect x="5" y="0" width="4" height="4" rx="0.6" fill="#2a2a2a"/><rect x="10" y="0" width="4" height="4" rx="0.6" fill="#2a2a2a"/><rect x="0" y="5" width="4" height="4" rx="0.6" fill="#2a2a2a"/><rect x="5" y="5" width="4" height="4" rx="0.6" fill="#2a2a2a"/><rect x="10" y="5" width="4" height="4" rx="0.6" fill="#2a2a2a"/><rect x="0" y="10" width="4" height="4" rx="0.6" fill="#2a2a2a"/><rect x="5" y="10" width="4" height="4" rx="0.6" fill="#2a2a2a"/><rect x="10" y="10" width="4" height="4" rx="0.6" fill="#2a2a2a"/></svg>
<svg style="position:absolute;left:1873.0px;top:198.0px" width="6" height="16" viewBox="0 0 6 16"><circle cx="3" cy="2.8" r="1.75" fill="#2a2a2a"/><circle cx="3" cy="7.8" r="1.75" fill="#2a2a2a"/><circle cx="3" cy="12.8" r="1.75" fill="#2a2a2a"/></svg>
<div style="position:absolute;left:1506.70px;top:265.10px;width:374.90px;height:1.00px;background:#e6e6e6;"></div>
<div style="position:absolute;left:1506.70px;top:524.30px;width:374.90px;height:1.00px;background:#e6e6e6;"></div>
<div style="position:absolute;left:1506.70px;top:459.50px;width:374.90px;height:1.00px;background:#e6e6e6;"></div>
<div style="position:absolute;left:1506.70px;top:394.70px;width:374.90px;height:1.00px;background:#e6e6e6;"></div>
<div style="position:absolute;left:1506.70px;top:329.90px;width:374.90px;height:1.00px;background:#e6e6e6;"></div>
<div style="position:absolute;left:1506.20px;top:265.60px;width:1.00px;height:324.00px;background:#e6e6e6;"></div>
<div style="position:absolute;left:1581.18px;top:265.60px;width:1.00px;height:324.00px;background:#e6e6e6;"></div>
<div style="position:absolute;left:1656.16px;top:265.60px;width:1.00px;height:324.00px;background:#e6e6e6;"></div>
<div style="position:absolute;left:1731.14px;top:265.60px;width:1.00px;height:324.00px;background:#e6e6e6;"></div>
<div style="position:absolute;left:1806.12px;top:265.60px;width:1.00px;height:324.00px;background:#e6e6e6;"></div>
<div style="position:absolute;left:1881.10px;top:265.60px;width:1.00px;height:324.00px;background:#e6e6e6;"></div>
<div style="position:absolute;top:585.60px;font-size:11.3px;line-height:11.3px;color:#666;white-space:nowrap;letter-spacing:-0.2px;left:691.50px;width:800px;text-align:right;">0</div>
<div style="position:absolute;top:520.80px;font-size:11.3px;line-height:11.3px;color:#666;white-space:nowrap;letter-spacing:-0.2px;left:691.50px;width:800px;text-align:right;">100M</div>
<div style="position:absolute;top:456.00px;font-size:11.3px;line-height:11.3px;color:#666;white-space:nowrap;letter-spacing:-0.2px;left:691.50px;width:800px;text-align:right;">200M</div>
<div style="position:absolute;top:391.20px;font-size:11.3px;line-height:11.3px;color:#666;white-space:nowrap;letter-spacing:-0.2px;left:691.50px;width:800px;text-align:right;">300M</div>
<div style="position:absolute;top:326.40px;font-size:11.3px;line-height:11.3px;color:#666;white-space:nowrap;letter-spacing:-0.2px;left:691.50px;width:800px;text-align:right;">400M</div>
<div style="position:absolute;top:261.60px;font-size:11.3px;line-height:11.3px;color:#666;white-space:nowrap;letter-spacing:-0.2px;left:691.50px;width:800px;text-align:right;">500M</div>
<div style="position:absolute;left:1525.69px;top:297.70px;width:37px;height:291.90px;background:#bcdb7b;border:1px solid #fff;border-bottom:0;box-sizing:border-box"></div>
<div style="position:absolute;top:285.49px;font-size:10.6px;line-height:10.6px;color:#222;white-space:nowrap;letter-spacing:-0.1px;-webkit-text-stroke:0.1px #222;left:1144.19px;width:800px;text-align:center;">448,915,003</div>
<div style="position:absolute;left:1600.67px;top:451.09px;width:37px;height:138.51px;background:#e6a8cc;border:1px solid #fff;border-bottom:0;box-sizing:border-box"></div>
<div style="position:absolute;top:438.88px;font-size:10.6px;line-height:10.6px;color:#222;white-space:nowrap;letter-spacing:-0.1px;-webkit-text-stroke:0.1px #222;left:1219.17px;width:800px;text-align:center;">212,202,591</div>
<div style="position:absolute;left:1675.65px;top:471.94px;width:37px;height:117.66px;background:#97d8df;border:1px solid #fff;border-bottom:0;box-sizing:border-box"></div>
<div style="position:absolute;top:459.73px;font-size:10.6px;line-height:10.6px;color:#222;white-space:nowrap;letter-spacing:-0.1px;-webkit-text-stroke:0.1px #222;left:1294.15px;width:800px;text-align:center;">180,024,339</div>
<div style="position:absolute;left:1750.63px;top:502.50px;width:37px;height:87.10px;background:#e8a072;border:1px solid #fff;border-bottom:0;box-sizing:border-box"></div>
<div style="position:absolute;top:490.29px;font-size:10.6px;line-height:10.6px;color:#222;white-space:nowrap;letter-spacing:-0.1px;-webkit-text-stroke:0.1px #222;left:1369.13px;width:800px;text-align:center;">132,875,461</div>
<div style="position:absolute;top:576.39px;font-size:10.6px;line-height:10.6px;color:#222;white-space:nowrap;letter-spacing:-0.1px;-webkit-text-stroke:0.1px #222;left:1444.11px;width:800px;text-align:center;">1,100</div>
<div style="position:absolute;left:1506.70px;top:589.10px;width:374.90px;height:1.00px;background:#ccd6eb;"></div>
<div style="position:absolute;left:945.19px;top:597.00px;width:600px;text-align:right;font-size:10.4px;line-height:12px;color:#666;white-space:nowrap;transform-origin:100% 50%;transform:rotate(-45deg)">1. Age &lt; 3 months</div>
<div style="position:absolute;left:1020.17px;top:597.00px;width:600px;text-align:right;font-size:10.4px;line-height:12px;color:#666;white-space:nowrap;transform-origin:100% 50%;transform:rotate(-45deg)">2. Age 3-5 months</div>
<div style="position:absolute;left:1095.15px;top:597.00px;width:600px;text-align:right;font-size:10.4px;line-height:12px;color:#666;white-space:nowrap;transform-origin:100% 50%;transform:rotate(-45deg)">3. Age 6-8 months</div>
<div style="position:absolute;left:1170.13px;top:597.00px;width:600px;text-align:right;font-size:10.4px;line-height:12px;color:#666;white-space:nowrap;transform-origin:100% 50%;transform:rotate(-45deg)">5. Age &gt;= 12 months</div>
<div style="position:absolute;left:1245.11px;top:597.00px;width:600px;text-align:right;font-size:10.4px;line-height:12px;color:#666;white-space:nowrap;transform-origin:100% 50%;transform:rotate(-45deg)">No Receipt date</div>
<div style="position:absolute;top:680.80px;font-size:12px;line-height:12px;color:#666;white-space:nowrap;letter-spacing:0.1px;left:1294.00px;width:800px;text-align:center;">Stock Age</div>
<div style="position:absolute;left:1352px;top:420px;width:200px;text-align:center;font-size:11.3px;line-height:14px;color:#666;white-space:nowrap;transform:rotate(-90deg)">Stock on hand value</div>
<div class="card" style="left:266px;top:730px;width:1638px;height:404px"></div>
<div style="position:absolute;left:266.00px;top:785.00px;width:1638.00px;height:1.00px;background:#e2e5eb;"></div>
<div style="position:absolute;top:749.95px;font-size:17px;line-height:17px;color:#2b2b2b;white-space:nowrap;letter-spacing:0.36px;left:282.50px;">Overstocked Problem Products</div>
<svg style="position:absolute;left:1714.0px;top:750.0px" width="16" height="16" viewBox="0 0 16 16"><circle cx="8" cy="8" r="8" fill="#2a2a2a"/><circle cx="8.2" cy="4.6" r="1.2" fill="#fff"/><path d="M6.2 6.9 H9.1 V10.9 H10 V12.1 H6.2 V10.9 H7.2 V8.1 H6.2 Z" fill="#fff"/></svg>
<svg style="position:absolute;left:1750.0px;top:750.0px" width="18" height="16" viewBox="0 0 18 16"><path d="M0.6 0.3 H17.4 Q18 0.6 17.6 1.3 L11.2 8.8 V14.6 Q11 16 9.6 15.6 L7.5 14 Q6.8 13.5 6.8 12.6 V8.8 L0.4 1.3 Q0 0.6 0.6 0.3 Z" fill="#2a2a2a"/></svg>
<svg style="position:absolute;left:1787.5px;top:750.0px" width="18" height="16" viewBox="0 0 18 16"><path d="M7.3 0.5 V8.7 L13.0 14.4 A8 8 0 1 1 7.3 0.5 Z" fill="#2a2a2a"/><path d="M8.9 0 A7.8 7.8 0 0 1 16.5 7.3 H8.9 Z" fill="#2a2a2a"/><path d="M10.2 8.9 H17.6 A7.8 7.8 0 0 1 14.6 13.4 Z" fill="#2a2a2a"/></svg>
<svg style="position:absolute;left:1829.0px;top:751.0px" width="14" height="14" viewBox="0 0 14 14"><rect x="0" y="0" width="4" height="4" rx="0.6" fill="#2a2a2a"/><rect x="5" y="0" width="4" height="4" rx="0.6" fill="#2a2a2a"/><rect x="10" y="0" width="4" height="4" rx="0.6" fill="#2a2a2a"/><rect x="0" y="5" width="4" height="4" rx="0.6" fill="#2a2a2a"/><rect x="5" y="5" width="4" height="4" rx="0.6" fill="#2a2a2a"/><rect x="10" y="5" width="4" height="4" rx="0.6" fill="#2a2a2a"/><rect x="0" y="10" width="4" height="4" rx="0.6" fill="#2a2a2a"/><rect x="5" y="10" width="4" height="4" rx="0.6" fill="#2a2a2a"/><rect x="10" y="10" width="4" height="4" rx="0.6" fill="#2a2a2a"/></svg>
<svg style="position:absolute;left:1873.0px;top:750.0px" width="6" height="16" viewBox="0 0 6 16"><circle cx="3" cy="2.8" r="1.75" fill="#2a2a2a"/><circle cx="3" cy="7.8" r="1.75" fill="#2a2a2a"/><circle cx="3" cy="12.8" r="1.75" fill="#2a2a2a"/></svg>
<div style="position:absolute;top:803.00px;font-size:13.3px;line-height:13.3px;color:#555;white-space:nowrap;letter-spacing:0.15px;left:288.40px;">Showing first 25 Product(s)</div>
<div style="position:absolute;left:336.90px;top:987.00px;width:1544.90px;height:1.00px;background:#e6e6e6;"></div>
<div style="position:absolute;top:983.29px;font-size:11.3px;line-height:11.3px;color:#666;white-space:nowrap;letter-spacing:-0.2px;left:-478.50px;width:800px;text-align:right;">0</div>
<div style="position:absolute;left:336.90px;top:947.00px;width:1544.90px;height:1.00px;background:#e6e6e6;"></div>
<div style="position:absolute;top:943.29px;font-size:11.3px;line-height:11.3px;color:#666;white-space:nowrap;letter-spacing:-0.2px;left:-478.50px;width:800px;text-align:right;">10</div>
<div style="position:absolute;left:336.90px;top:907.00px;width:1544.90px;height:1.00px;background:#e6e6e6;"></div>
<div style="position:absolute;top:903.29px;font-size:11.3px;line-height:11.3px;color:#666;white-space:nowrap;letter-spacing:-0.2px;left:-478.50px;width:800px;text-align:right;">20</div>
<div style="position:absolute;left:336.90px;top:867.00px;width:1544.90px;height:1.00px;background:#e6e6e6;"></div>
<div style="position:absolute;top:863.29px;font-size:11.3px;line-height:11.3px;color:#666;white-space:nowrap;letter-spacing:-0.2px;left:-478.50px;width:800px;text-align:right;">30</div>
<div style="position:absolute;left:336.90px;top:827.00px;width:1544.90px;height:1.00px;background:#e6e6e6;"></div>
<div style="position:absolute;top:823.29px;font-size:11.3px;line-height:11.3px;color:#666;white-space:nowrap;letter-spacing:-0.2px;left:-478.50px;width:800px;text-align:right;">40</div>
<div style="position:absolute;left:336.40px;top:827.50px;width:1.00px;height:160.00px;background:#e6e6e6;"></div>
<div style="position:absolute;left:398.20px;top:827.50px;width:1.00px;height:160.00px;background:#e6e6e6;"></div>
<div style="position:absolute;left:459.99px;top:827.50px;width:1.00px;height:160.00px;background:#e6e6e6;"></div>
<div style="position:absolute;left:521.79px;top:827.50px;width:1.00px;height:160.00px;background:#e6e6e6;"></div>
<div style="position:absolute;left:583.58px;top:827.50px;width:1.00px;height:160.00px;background:#e6e6e6;"></div>
<div style="position:absolute;left:645.38px;top:827.50px;width:1.00px;height:160.00px;background:#e6e6e6;"></div>
<div style="position:absolute;left:707.18px;top:827.50px;width:1.00px;height:160.00px;background:#e6e6e6;"></div>
<div style="position:absolute;left:768.97px;top:827.50px;width:1.00px;height:160.00px;background:#e6e6e6;"></div>
<div style="position:absolute;left:830.77px;top:827.50px;width:1.00px;height:160.00px;background:#e6e6e6;"></div>
<div style="position:absolute;left:892.56px;top:827.50px;width:1.00px;height:160.00px;background:#e6e6e6;"></div>
<div style="position:absolute;left:954.36px;top:827.50px;width:1.00px;height:160.00px;background:#e6e6e6;"></div>
<div style="position:absolute;left:1016.16px;top:827.50px;width:1.00px;height:160.00px;background:#e6e6e6;"></div>
<div style="position:absolute;left:1077.95px;top:827.50px;width:1.00px;height:160.00px;background:#e6e6e6;"></div>
<div style="position:absolute;left:1139.75px;top:827.50px;width:1.00px;height:160.00px;background:#e6e6e6;"></div>
<div style="position:absolute;left:1201.54px;top:827.50px;width:1.00px;height:160.00px;background:#e6e6e6;"></div>
<div style="position:absolute;left:1263.34px;top:827.50px;width:1.00px;height:160.00px;background:#e6e6e6;"></div>
<div style="position:absolute;left:1325.14px;top:827.50px;width:1.00px;height:160.00px;background:#e6e6e6;"></div>
<div style="position:absolute;left:1386.93px;top:827.50px;width:1.00px;height:160.00px;background:#e6e6e6;"></div>
<div style="position:absolute;left:1448.73px;top:827.50px;width:1.00px;height:160.00px;background:#e6e6e6;"></div>
<div style="position:absolute;left:1510.52px;top:827.50px;width:1.00px;height:160.00px;background:#e6e6e6;"></div>
<div style="position:absolute;left:1572.32px;top:827.50px;width:1.00px;height:160.00px;background:#e6e6e6;"></div>
<div style="position:absolute;left:1634.12px;top:827.50px;width:1.00px;height:160.00px;background:#e6e6e6;"></div>
<div style="position:absolute;left:1695.91px;top:827.50px;width:1.00px;height:160.00px;background:#e6e6e6;"></div>
<div style="position:absolute;left:1757.71px;top:827.50px;width:1.00px;height:160.00px;background:#e6e6e6;"></div>
<div style="position:absolute;left:1819.50px;top:827.50px;width:1.00px;height:160.00px;background:#e6e6e6;"></div>
<div style="position:absolute;left:1881.30px;top:827.50px;width:1.00px;height:160.00px;background:#e6e6e6;"></div>
<div style="position:absolute;top:973.66px;font-size:10.4px;line-height:10.4px;color:#222;white-space:nowrap;letter-spacing:-0.6px;-webkit-text-stroke:0.1px #222;left:-32.20px;width:800px;text-align:center;">0.1</div>
<div style="position:absolute;left:-231.20px;top:994.00px;width:600px;text-align:right;font-size:10.9px;line-height:12px;color:#666;white-space:nowrap;transform-origin:100% 50%;transform:rotate(-45deg)">Gorgeous t...</div>
<div style="position:absolute;top:973.66px;font-size:10.4px;line-height:10.4px;color:#222;white-space:nowrap;letter-spacing:-0.6px;-webkit-text-stroke:0.1px #222;left:29.59px;width:800px;text-align:center;">0.1</div>
<div style="position:absolute;left:-169.41px;top:994.00px;width:600px;text-align:right;font-size:10.9px;line-height:12px;color:#666;white-space:nowrap;transform-origin:100% 50%;transform:rotate(-45deg)">Handmade white Towels</div>
<div style="position:absolute;top:973.66px;font-size:10.4px;line-height:10.4px;color:#222;white-space:nowrap;letter-spacing:-0.6px;-webkit-text-stroke:0.1px #222;left:91.39px;width:800px;text-align:center;">0.1</div>
<div style="position:absolute;left:-107.61px;top:994.00px;width:600px;text-align:right;font-size:10.9px;line-height:12px;color:#666;white-space:nowrap;transform-origin:100% 50%;transform:rotate(-45deg)">Unbranded sky blue Ball</div>
<div style="position:absolute;left:537.69px;top:986.70px;width:31px;height:0.80px;background:#e8a072;border:1px solid #fff;border-bottom:0;box-sizing:border-box"></div>
<div style="position:absolute;top:973.26px;font-size:10.4px;line-height:10.4px;color:#222;white-space:nowrap;letter-spacing:-0.6px;-webkit-text-stroke:0.1px #222;left:153.19px;width:800px;text-align:center;">0.2</div>
<div style="position:absolute;left:-45.81px;top:994.00px;width:600px;text-align:right;font-size:10.9px;line-height:12px;color:#666;white-space:nowrap;transform-origin:100% 50%;transform:rotate(-45deg)">Handmade pink Shirt</div>
<div style="position:absolute;left:599.48px;top:985.50px;width:31px;height:2.00px;background:#dccd9c;border:1px solid #fff;border-bottom:0;box-sizing:border-box"></div>
<div style="position:absolute;top:972.06px;font-size:10.4px;line-height:10.4px;color:#222;white-space:nowrap;letter-spacing:-0.6px;-webkit-text-stroke:0.1px #222;left:214.98px;width:800px;text-align:center;">0.5</div>
<div style="position:absolute;left:15.98px;top:994.00px;width:600px;text-align:right;font-size:10.9px;line-height:12px;color:#666;white-space:nowrap;transform-origin:100% 50%;transform:rotate(-45deg)">Intelligen...</div>
<div style="position:absolute;left:661.28px;top:985.50px;width:31px;height:2.00px;background:#d6b96a;border:1px solid #fff;border-bottom:0;box-sizing:border-box"></div>
<div style="position:absolute;top:972.06px;font-size:10.4px;line-height:10.4px;color:#222;white-space:nowrap;letter-spacing:-0.6px;-webkit-text-stroke:0.1px #222;left:276.78px;width:800px;text-align:center;">0.5</div>
<div style="position:absolute;left:77.78px;top:994.00px;width:600px;text-align:right;font-size:10.9px;line-height:12px;color:#666;white-space:nowrap;transform-origin:100% 50%;transform:rotate(-45deg)">Practical orchid Cheese</div>
<div style="position:absolute;left:723.07px;top:984.70px;width:31px;height:2.80px;background:#9dd89b;border:1px solid #fff;border-bottom:0;box-sizing:border-box"></div>
<div style="position:absolute;top:971.26px;font-size:10.4px;line-height:10.4px;color:#222;white-space:nowrap;letter-spacing:-0.6px;-webkit-text-stroke:0.1px #222;left:338.57px;width:800px;text-align:center;">0.7</div>
<div style="position:absolute;left:139.57px;top:994.00px;width:600px;text-align:right;font-size:10.9px;line-height:12px;color:#666;white-space:nowrap;transform-origin:100% 50%;transform:rotate(-45deg)">Awesome gold Tuna</div>
<div style="position:absolute;left:784.87px;top:979.50px;width:31px;height:8.00px;background:#dfa5a1;border:1px solid #fff;border-bottom:0;box-sizing:border-box"></div>
<div style="position:absolute;top:966.06px;font-size:10.4px;line-height:10.4px;color:#222;white-space:nowrap;letter-spacing:-0.6px;-webkit-text-stroke:0.1px #222;left:400.37px;width:800px;text-align:center;">2</div>
<div style="position:absolute;left:201.37px;top:994.00px;width:600px;text-align:right;font-size:10.9px;line-height:12px;color:#666;white-space:nowrap;transform-origin:100% 50%;transform:rotate(-45deg)">Practical silver Gloves</div>
<div style="position:absolute;left:846.67px;top:972.70px;width:31px;height:14.80px;background:#b8c4b4;border:1px solid #fff;border-bottom:0;box-sizing:border-box"></div>
<div style="position:absolute;top:959.26px;font-size:10.4px;line-height:10.4px;color:#222;white-space:nowrap;letter-spacing:-0.6px;-webkit-text-stroke:0.1px #222;left:462.17px;width:800px;text-align:center;">3.7</div>
<div style="position:absolute;left:263.17px;top:994.00px;width:600px;text-align:right;font-size:10.9px;line-height:12px;color:#666;white-space:nowrap;transform-origin:100% 50%;transform:rotate(-45deg)">Gorgeous red Towels</div>
<div style="position:absolute;left:908.46px;top:970.70px;width:31px;height:16.80px;background:#9fb9de;border:1px solid #fff;border-bottom:0;box-sizing:border-box"></div>
<div style="position:absolute;top:957.26px;font-size:10.4px;line-height:10.4px;color:#222;white-space:nowrap;letter-spacing:-0.6px;-webkit-text-stroke:0.1px #222;left:523.96px;width:800px;text-align:center;">4.2</div>
<div style="position:absolute;left:324.96px;top:994.00px;width:600px;text-align:right;font-size:10.9px;line-height:12px;color:#666;white-space:nowrap;transform-origin:100% 50%;transform:rotate(-45deg)">Generic Rubber Pants</div>
<div style="position:absolute;left:970.26px;top:968.30px;width:31px;height:19.20px;background:#84dbc1;border:1px solid #fff;border-bottom:0;box-sizing:border-box"></div>
<div style="position:absolute;top:954.86px;font-size:10.4px;line-height:10.4px;color:#222;white-space:nowrap;letter-spacing:-0.6px;-webkit-text-stroke:0.1px #222;left:585.76px;width:800px;text-align:center;">4.8</div>
<div style="position:absolute;left:386.76px;top:994.00px;width:600px;text-align:right;font-size:10.9px;line-height:12px;color:#666;white-space:nowrap;transform-origin:100% 50%;transform:rotate(-45deg)">Incredible...</div>
<div style="position:absolute;left:1032.05px;top:955.90px;width:31px;height:31.60px;background:#cfbfdb;border:1px solid #fff;border-bottom:0;box-sizing:border-box"></div>
<div style="position:absolute;top:942.46px;font-size:10.4px;line-height:10.4px;color:#222;white-space:nowrap;letter-spacing:-0.6px;-webkit-text-stroke:0.1px #222;left:647.55px;width:800px;text-align:center;">7.9</div>
<div style="position:absolute;left:448.55px;top:994.00px;width:600px;text-align:right;font-size:10.9px;line-height:12px;color:#666;white-space:nowrap;transform-origin:100% 50%;transform:rotate(-45deg)">Rustic lavender Pants</div>
<div style="position:absolute;left:1093.85px;top:949.10px;width:31px;height:38.40px;background:#bcdb7b;border:1px solid #fff;border-bottom:0;box-sizing:border-box"></div>
<div style="position:absolute;top:935.66px;font-size:10.4px;line-height:10.4px;color:#222;white-space:nowrap;letter-spacing:-0.6px;-webkit-text-stroke:0.1px #222;left:709.35px;width:800px;text-align:center;">9.6</div>
<div style="position:absolute;left:510.35px;top:994.00px;width:600px;text-align:right;font-size:10.9px;line-height:12px;color:#666;white-space:nowrap;transform-origin:100% 50%;transform:rotate(-45deg)">Gorgeous Metal Chicken</div>
<div style="position:absolute;left:1155.65px;top:941.10px;width:31px;height:46.40px;background:#e6a8cc;border:1px solid #fff;border-bottom:0;box-sizing:border-box"></div>
<div style="position:absolute;top:927.66px;font-size:10.4px;line-height:10.4px;color:#222;white-space:nowrap;letter-spacing:-0.6px;-webkit-text-stroke:0.1px #222;left:771.15px;width:800px;text-align:center;">11.6</div>
<div style="position:absolute;left:572.15px;top:994.00px;width:600px;text-align:right;font-size:10.9px;line-height:12px;color:#666;white-space:nowrap;transform-origin:100% 50%;transform:rotate(-45deg)">Ergonomic ...</div>
<div style="position:absolute;left:1217.44px;top:939.50px;width:31px;height:48.00px;background:#97d8df;border:1px solid #fff;border-bottom:0;box-sizing:border-box"></div>
<div style="position:absolute;top:926.06px;font-size:10.4px;line-height:10.4px;color:#222;white-space:nowrap;letter-spacing:-0.6px;-webkit-text-stroke:0.1px #222;left:832.94px;width:800px;text-align:center;">12</div>
<div style="position:absolute;left:633.94px;top:994.00px;width:600px;text-align:right;font-size:10.9px;line-height:12px;color:#666;white-space:nowrap;transform-origin:100% 50%;transform:rotate(-45deg)">Sleek magenta Chicken</div>
<div style="position:absolute;left:1279.24px;top:935.50px;width:31px;height:52.00px;background:#e8a072;border:1px solid #fff;border-bottom:0;box-sizing:border-box"></div>
<div style="position:absolute;top:922.06px;font-size:10.4px;line-height:10.4px;color:#222;white-space:nowrap;letter-spacing:-0.6px;-webkit-text-stroke:0.1px #222;left:894.74px;width:800px;text-align:center;">13</div>
<div style="position:absolute;left:695.74px;top:994.00px;width:600px;text-align:right;font-size:10.9px;line-height:12px;color:#666;white-space:nowrap;transform-origin:100% 50%;transform:rotate(-45deg)">Handmade Fresh Bacon</div>
<div style="position:absolute;left:1341.03px;top:932.70px;width:31px;height:54.80px;background:#dccd9c;border:1px solid #fff;border-bottom:0;box-sizing:border-box"></div>
<div style="position:absolute;top:919.26px;font-size:10.4px;line-height:10.4px;color:#222;white-space:nowrap;letter-spacing:-0.6px;-webkit-text-stroke:0.1px #222;left:956.53px;width:800px;text-align:center;">13.7</div>
<div style="position:absolute;left:757.53px;top:994.00px;width:600px;text-align:right;font-size:10.9px;line-height:12px;color:#666;white-space:nowrap;transform-origin:100% 50%;transform:rotate(-45deg)">Incredible orchid Bacon</div>
<div style="position:absolute;left:1402.83px;top:930.70px;width:31px;height:56.80px;background:#d6b96a;border:1px solid #fff;border-bottom:0;box-sizing:border-box"></div>
<div style="position:absolute;top:917.26px;font-size:10.4px;line-height:10.4px;color:#222;white-space:nowrap;letter-spacing:-0.6px;-webkit-text-stroke:0.1px #222;left:1018.33px;width:800px;text-align:center;">14.2</div>
<div style="position:absolute;left:819.33px;top:994.00px;width:600px;text-align:right;font-size:10.9px;line-height:12px;color:#666;white-space:nowrap;transform-origin:100% 50%;transform:rotate(-45deg)">Refined violet Gloves</div>
<div style="position:absolute;left:1464.63px;top:926.30px;width:31px;height:61.20px;background:#9dd89b;border:1px solid #fff;border-bottom:0;box-sizing:border-box"></div>
<div style="position:absolute;top:912.86px;font-size:10.4px;line-height:10.4px;color:#222;white-space:nowrap;letter-spacing:-0.6px;-webkit-text-stroke:0.1px #222;left:1080.13px;width:800px;text-align:center;">15.3</div>
<div style="position:absolute;left:881.13px;top:994.00px;width:600px;text-align:right;font-size:10.9px;line-height:12px;color:#666;white-space:nowrap;transform-origin:100% 50%;transform:rotate(-45deg)">Handmade blue Fish</div>
<div style="position:absolute;left:1526.42px;top:913.90px;width:31px;height:73.60px;background:#dfa5a1;border:1px solid #fff;border-bottom:0;box-sizing:border-box"></div>
<div style="position:absolute;top:900.46px;font-size:10.4px;line-height:10.4px;color:#222;white-space:nowrap;letter-spacing:-0.6px;-webkit-text-stroke:0.1px #222;left:1141.92px;width:800px;text-align:center;">18.4</div>
<div style="position:absolute;left:942.92px;top:994.00px;width:600px;text-align:right;font-size:10.9px;line-height:12px;color:#666;white-space:nowrap;transform-origin:100% 50%;transform:rotate(-45deg)">Small lime Shirt</div>
<div style="position:absolute;left:1588.22px;top:895.10px;width:31px;height:92.40px;background:#b8c4b4;border:1px solid #fff;border-bottom:0;box-sizing:border-box"></div>
<div style="position:absolute;top:881.66px;font-size:10.4px;line-height:10.4px;color:#222;white-space:nowrap;letter-spacing:-0.6px;-webkit-text-stroke:0.1px #222;left:1203.72px;width:800px;text-align:center;">23.1</div>
<div style="position:absolute;left:1004.72px;top:994.00px;width:600px;text-align:right;font-size:10.9px;line-height:12px;color:#666;white-space:nowrap;transform-origin:100% 50%;transform:rotate(-45deg)">Incredible Concrete Shirt</div>
<div style="position:absolute;left:1650.01px;top:886.70px;width:31px;height:100.80px;background:#9fb9de;border:1px solid #fff;border-bottom:0;box-sizing:border-box"></div>
<div style="position:absolute;top:873.26px;font-size:10.4px;line-height:10.4px;color:#222;white-space:nowrap;letter-spacing:-0.6px;-webkit-text-stroke:0.1px #222;left:1265.51px;width:800px;text-align:center;">25.2</div>
<div style="position:absolute;left:1066.51px;top:994.00px;width:600px;text-align:right;font-size:10.9px;line-height:12px;color:#666;white-space:nowrap;transform-origin:100% 50%;transform:rotate(-45deg)">Ergonomic maroon Ball</div>
<div style="position:absolute;left:1711.81px;top:881.50px;width:31px;height:106.00px;background:#84dbc1;border:1px solid #fff;border-bottom:0;box-sizing:border-box"></div>
<div style="position:absolute;top:868.06px;font-size:10.4px;line-height:10.4px;color:#222;white-space:nowrap;letter-spacing:-0.6px;-webkit-text-stroke:0.1px #222;left:1327.31px;width:800px;text-align:center;">26.5</div>
<div style="position:absolute;left:1128.31px;top:994.00px;width:600px;text-align:right;font-size:10.9px;line-height:12px;color:#666;white-space:nowrap;transform-origin:100% 50%;transform:rotate(-45deg)">Практичный...</div>
<div style="position:absolute;left:1773.61px;top:878.70px;width:31px;height:108.80px;background:#cfbfdb;border:1px solid #fff;border-bottom:0;box-sizing:border-box"></div>
<div style="position:absolute;top:865.26px;font-size:10.4px;line-height:10.4px;color:#222;white-space:nowrap;letter-spacing:-0.6px;-webkit-text-stroke:0.1px #222;left:1389.11px;width:800px;text-align:center;">27.2</div>
<div style="position:absolute;left:1190.11px;top:994.00px;width:600px;text-align:right;font-size:10.9px;line-height:12px;color:#666;white-space:nowrap;transform-origin:100% 50%;transform:rotate(-45deg)">Intelligent fuchsia Chair</div>
<div style="position:absolute;left:1835.40px;top:870.70px;width:31px;height:116.80px;background:#bcdb7b;border:1px solid #fff;border-bottom:0;box-sizing:border-box"></div>
<div style="position:absolute;top:857.26px;font-size:10.4px;line-height:10.4px;color:#222;white-space:nowrap;letter-spacing:-0.6px;-webkit-text-stroke:0.1px #222;left:1450.90px;width:800px;text-align:center;">29.2</div>
<div style="position:absolute;left:1251.90px;top:994.00px;width:600px;text-align:right;font-size:10.9px;line-height:12px;color:#666;white-space:nowrap;transform-origin:100% 50%;transform:rotate(-45deg)">Handmade cyan Hat</div>
<div style="position:absolute;left:336.90px;top:987.00px;width:1544.90px;height:1.00px;background:#ccd6eb;"></div>
<div style="position:absolute;top:1094.80px;font-size:12px;line-height:12px;color:#666;white-space:nowrap;letter-spacing:0.1px;left:709.00px;width:800px;text-align:center;">Product</div>
<div style="position:absolute;left:198.39999999999998px;top:900.6px;width:200px;text-align:center;font-size:11.9px;line-height:14px;color:#666;white-space:nowrap;transform:rotate(-90deg)">Average days to sell</div>
<div style="position:absolute;left:240.00px;top:1145.00px;width:1690.00px;height:1.00px;background:#d6e0e6;"></div>
<svg style="position:absolute;left:1028px;top:1126px" width="128" height="20" viewBox="0 0 128 20"><path d="M0 19.5 L34 0.5 H94 L127.5 19.5 Z" fill="#eef0f4" stroke="#d6e0e6" stroke-width="1"/><rect x="1" y="19" width="126" height="2" fill="#eef0f4"/></svg>
<div style="position:absolute;top:1129.94px;font-size:13.6px;line-height:13.6px;color:#7d8a99;white-space:nowrap;left:692.00px;width:800px;text-align:center;">show</div>
<div style="position:absolute;left:255px;top:1161px;width:830px;height:80px;background:#fff"></div>
<div style="position:absolute;left:1100px;top:1161px;width:830px;height:80px;background:#fff"></div>
<div style="position:absolute;top:1193.55px;font-size:17px;line-height:17px;color:#2b2b2b;white-space:nowrap;letter-spacing:0.05px;left:290.00px;">Transactions</div>
<div style="position:absolute;left:399px;top:1195px;width:42px;height:17px;border-radius:9px;background:#dc1b32;color:#fff;font-size:11px;text-align:center;line-height:17px;-webkit-text-stroke:0.2px #fff">30539</div>
<div style="position:absolute;left:1008px;top:1186px;width:42px;height:34px;border-radius:4px;background:#efefef;border:1px solid #d9dcdf"></div>
<svg style="position:absolute;left:1021px;top:1196px" width="15" height="14" viewBox="0 0 15 14"><path d="M2.2 6 A5.3 5.3 0 0 1 11.6 3.6" fill="none" stroke="#262626" stroke-width="2"/><path d="M13.3 0.8 V5.6 H8.5 Z" fill="#262626"/><path d="M12.8 8 A5.3 5.3 0 0 1 3.4 10.4" fill="none" stroke="#262626" stroke-width="2"/><path d="M1.7 13.2 V8.4 H6.5 Z" fill="#262626"/></svg>
<div style="position:absolute;top:1193.05px;font-size:17px;line-height:17px;color:#2b2b2b;white-space:nowrap;letter-spacing:0.2px;left:1132.00px;">Batch Expiry</div>
<div style="position:absolute;left:1244px;top:1194px;width:17px;height:17px;border-radius:50%;background:#dc1b32;color:#fff;font-size:11px;text-align:center;line-height:17px;font-weight:bold">4</div>
</body></html>
